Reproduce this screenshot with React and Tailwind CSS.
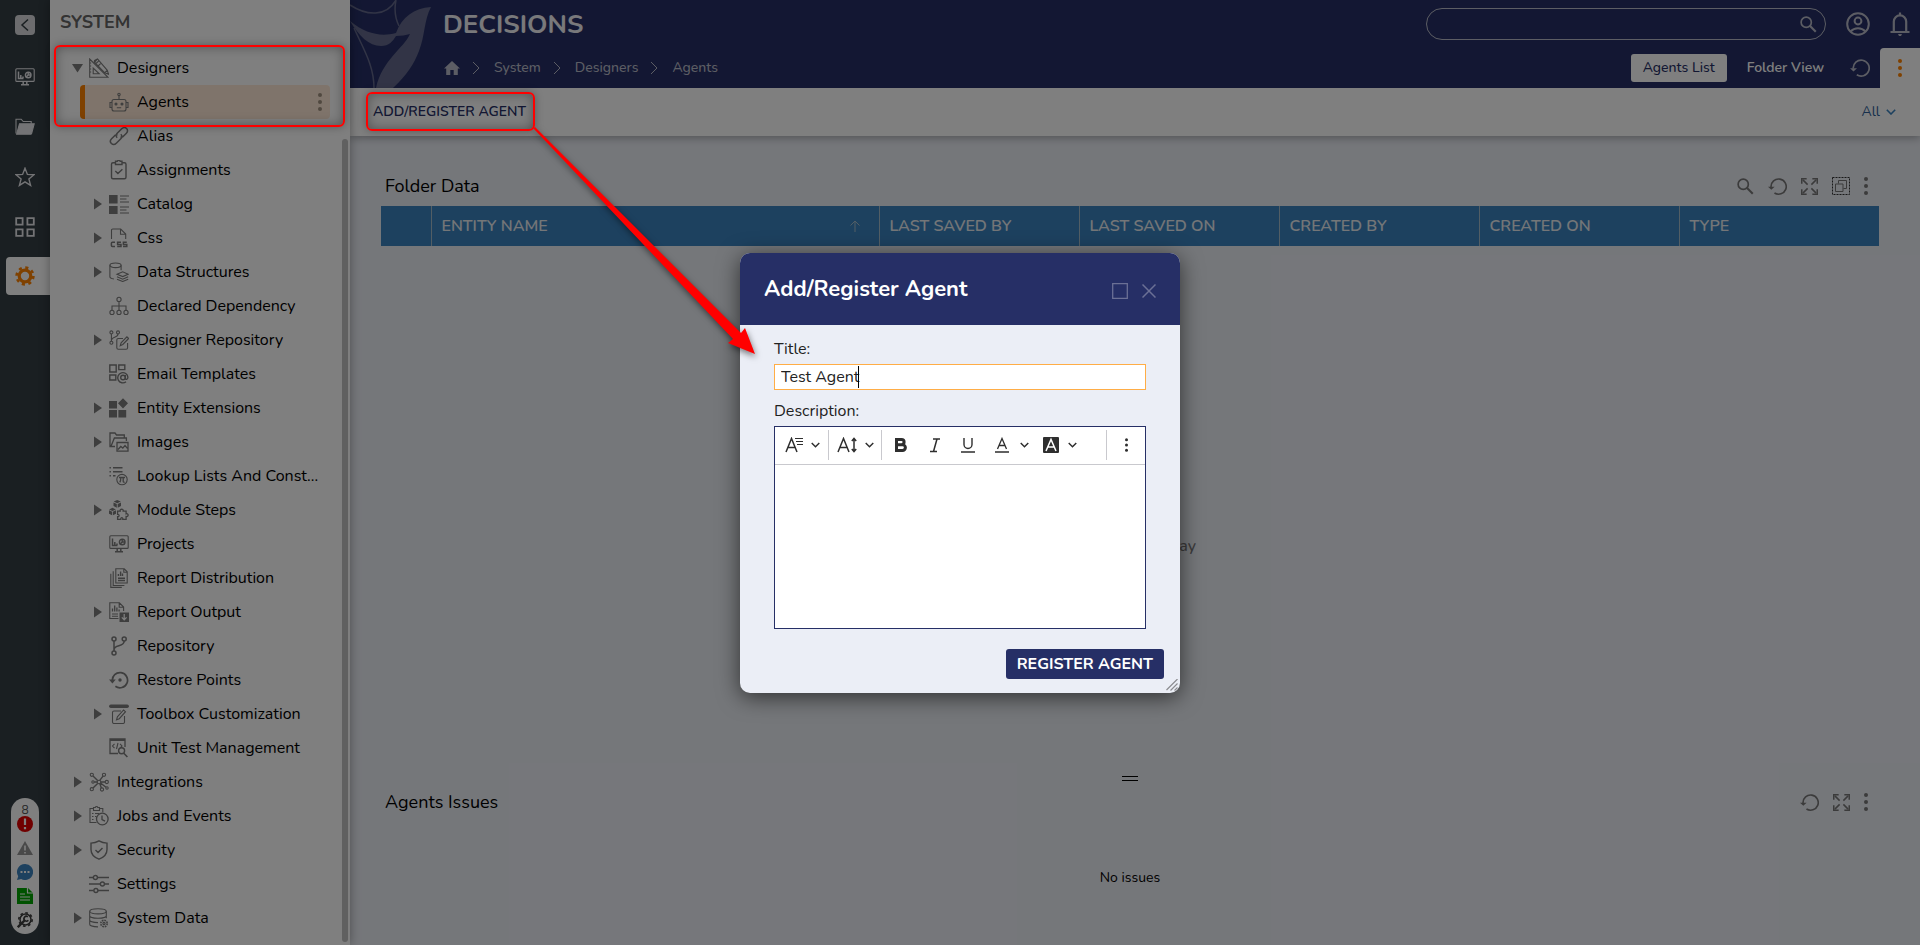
import { useState } from 'react';

// =====================================================================
// Decisions studio — folder page with the "Add/Register Agent" dialog.
// =====================================================================

const TREE = [
  { label: 'Designers', icon: 'designers', depth: 1, arrow: 'down' },
  { label: 'Agents', icon: 'agents', depth: 2, selected: true },
  { label: 'Alias', icon: 'alias', depth: 2 },
  { label: 'Assignments', icon: 'assignments', depth: 2 },
  { label: 'Catalog', icon: 'catalog', depth: 2, arrow: 'right' },
  { label: 'Css', icon: 'css', depth: 2, arrow: 'right' },
  { label: 'Data Structures', icon: 'dataStructures', depth: 2, arrow: 'right' },
  { label: 'Declared Dependency', icon: 'dependency', depth: 2 },
  { label: 'Designer Repository', icon: 'designerRepo', depth: 2, arrow: 'right' },
  { label: 'Email Templates', icon: 'email', depth: 2 },
  { label: 'Entity Extensions', icon: 'entity', depth: 2, arrow: 'right' },
  { label: 'Images', icon: 'images', depth: 2, arrow: 'right' },
  { label: 'Lookup Lists And Const...', icon: 'lookup', depth: 2 },
  { label: 'Module Steps', icon: 'module', depth: 2, arrow: 'right' },
  { label: 'Projects', icon: 'projects', depth: 2 },
  { label: 'Report Distribution', icon: 'reportDist', depth: 2 },
  { label: 'Report Output', icon: 'reportOut', depth: 2, arrow: 'right' },
  { label: 'Repository', icon: 'repository', depth: 2 },
  { label: 'Restore Points', icon: 'restore', depth: 2 },
  { label: 'Toolbox Customization', icon: 'toolbox', depth: 2, arrow: 'right' },
  { label: 'Unit Test Management', icon: 'unitTest', depth: 2 },
  { label: 'Integrations', icon: 'integrations', depth: 1, arrow: 'right' },
  { label: 'Jobs and Events', icon: 'jobs', depth: 1, arrow: 'right' },
  { label: 'Security', icon: 'security', depth: 1, arrow: 'right' },
  { label: 'Settings', icon: 'settings', depth: 1 },
  { label: 'System Data', icon: 'systemData', depth: 1, arrow: 'right' },
];

const COLUMNS = ['LAST SAVED BY', 'LAST SAVED ON', 'CREATED BY', 'CREATED ON', 'TYPE'];

// ─── 20×20 outline drawings ──────────────────────────────────────────
const ICONS = {
  monitor: (
    <>
      <rect x="0.8" y="1.8" width="18.4" height="12.6" rx="1" />
      <path strokeWidth="1.5" d="M3.5 4.5v7h5M5.8 11V8M8 11V9.5M6 17.8h8M8.2 14.5v3.3M11.8 14.5v3.3" />
      <circle cx="13.2" cy="8" r="2.8" strokeWidth="1.4" />
      <path strokeWidth="1.4" d="M13.2 5.2V8h2.8M13.2 8l-2 1.9" />
    </>
  ),
  folder: (
    <>
      <path d="M1 16.5V2.2h5.2l2 2.3h8v2.2" />
      <path d="M4.5 6.8h14.7l-2.6 9.7a1 1 0 0 1-1 .8H1.6z" fill="currentColor" />
    </>
  ),
  star: <path strokeWidth="1.4" d="M10 1.2l2.4 6.2 6.6.3-5.1 4.2 1.7 6.5L10 14.8l-5.6 3.6 1.7-6.5L1 7.7l6.6-.3z" />,
  grid: <path strokeWidth="1.8" d="M1.2 1.2h6.4v6.4H1.2zM12.4 1.2h6.4v6.4h-6.4zM1.2 12.4h6.4v6.4H1.2zM12.4 12.4h6.4v6.4h-6.4z" />,
  designers: (
    <>
      <path d="M.7 1v18.3H19z M4.2 10v5.8h6z M.7 5h1.5M.7 8h1.5M.7 11h1.5M.7 14h1.5" />
      <path d="M5.5 2.5l3-1.5 9.8 11.3 1.2 3.9-3.7-1.4L5.2 4zM8.5 1l-2.8 3.2M7 5.5l2.8-2.6M9 8l2.6-2.4M15.6 14.8l2.5-2.4" />
    </>
  ),
  agents: (
    <>
      <rect x="3" y="7.5" width="14" height="11.5" rx="2" />
      <path d="M3 10.5H1v5h2M17 10.5h2v5h-2M10 7.5V3.5M7.8 15.8h4.4" />
      <circle cx="10" cy="2.4" r="1.2" />
      <circle cx="7" cy="12" r="1" fill="currentColor" />
      <circle cx="13" cy="12" r="1" fill="currentColor" />
    </>
  ),
  alias: (
    <path strokeWidth="1.5" d="M8.2 11.8c-1.4-1.4-1.3-3.2 0-4.5l4.5-4.5c1.5-1.5 3.6-1.5 4.9-.3 1.3 1.3 1.2 3.4-.2 4.8l-3.6 3.6-2.4.4M11.8 8.2c1.4 1.4 1.3 3.2 0 4.5l-4.5 4.5c-1.5 1.5-3.6 1.5-4.9.3-1.3-1.3-1.2-3.4.2-4.8l3.6-3.6 2.4-.4" />
  ),
  assignments: (
    <>
      <path strokeWidth="1.4" d="M6.5 2.8H4a1.5 1.5 0 0 0-1.5 1.5v13A1.5 1.5 0 0 0 4 18.8h11.5a1.5 1.5 0 0 0 1.5-1.5v-13a1.5 1.5 0 0 0-1.5-1.5H13" />
      <path strokeWidth="1.4" d="M6.5 1.2h1.8a1.6 1.6 0 0 1 2.9 0H13v3.3H6.5zM6.3 11l2.6 2.6 4.5-4.4" />
    </>
  ),
  catalog: (
    <>
      <path fill="currentColor" stroke="none" d="M0 1h8.6v8.4H0zM0 12h8.6v8H0z" />
      <path d="M11 2h9M11 5h6.5M11 8h9M11 13h9M11 16h6.5M11 19h9" />
    </>
  ),
  css: (
    <>
      <path d="M2.5 11V2.2A1.2 1.2 0 0 1 3.7 1h8l5 5v5M11.5 1v5.2h5" />
      <path strokeWidth="1.5" d="M6 14.2H3.4a1 1 0 0 0-1 1v2.4a1 1 0 0 0 1 1H6M12 14.2H8.6v2.2H12v2.2H8.2M17.8 14.2h-3.4v2.2h3.4v2.2H14" />
    </>
  ),
  dataStructures: (
    <>
      <ellipse cx="6.5" cy="3.3" rx="5.6" ry="2.3" />
      <path d="M.9 3.3v11.5c0 1.1 1.7 1.9 4 2.2M12.1 3.3v5" />
      <path d="M8 12.2l5.7-2.4 5.5 2.4-5.5 2.4zM8 14.8l5.7 2.4 5.5-2.4M8 17.3l5.7 2.2 5.5-2.2" />
    </>
  ),
  dependency: (
    <>
      <circle cx="10" cy="3.4" r="2.1" />
      <circle cx="3" cy="16.4" r="2.1" />
      <circle cx="10" cy="16.4" r="2.1" />
      <circle cx="17" cy="16.4" r="2.1" />
      <path d="M10 5.5v8.8M3 14.3V10h14v4.3" />
    </>
  ),
  designerRepo: (
    <>
      <circle cx="2.4" cy="2.4" r="1.5" />
      <circle cx="9" cy="2.4" r="1.5" />
      <circle cx="2.4" cy="12.8" r="1.5" />
      <path d="M2.4 4v7.2M9 4c0 4-6.4 2.5-6.4 6" />
      <path d="M14 8.5H9.3a1.5 1.5 0 0 0-1.5 1.5v7.7a1.5 1.5 0 0 0 1.5 1.5h7.8a1.5 1.5 0 0 0 1.5-1.5V13M11.2 15.8l.9-3 5.8-6 1.7 1.7-5.8 6z" />
    </>
  ),
  email: (
    <>
      <path strokeWidth="1.4" d="M.8 1h6.4v7H.8zM9.8 1h6v4.6h-6zM.8 11h6v5h-6z" />
      <circle cx="14" cy="13.5" r="2.3" strokeWidth="1.4" />
      <path strokeWidth="1.4" d="M16.3 11v3.3c0 1.7 2.6 1.4 2.6-1A5.1 5.1 0 1 0 17 17.7" />
    </>
  ),
  entity: <path fill="currentColor" stroke="none" d="M0 3h8v7.6H0zM0 12h8v7.6H0zM9.4 12h7.8v7.6H9.4zM14 .2l5 5.1-5 5.1-5-5.1z" />,
  images: (
    <>
      <path strokeWidth="1.3" d="M6 14.5H1V1h5l1.5 2h7.8v2.6M2 14.3L5.4 6h12v3" />
      <path strokeWidth="1.3" d="M8 10.5h11v8.7H8zM9 17.5l2.8-3 2 1.6 2.2-2.5 2.4 2.8" />
    </>
  ),
  lookup: (
    <>
      <path strokeWidth="1.4" d="M.5 1.8h1.4M4 1.8h9.5M.5 5.8h1.4M4 5.8h9.5M.5 9.8h1.4M4 9.8h2.5" />
      <circle cx="13" cy="13.6" r="5.2" />
      <path strokeWidth="1.3" d="M10 11.5h6M11.8 11.8c0 2-.2 3.4-1 4.5M14.2 11.6v3.6c0 .9.7 1.2 1.5.8" />
    </>
  ),
  module: (
    <>
      <path fill="currentColor" stroke="none" d="M8.2 0l3.6 1.6L8.2 3.3 4.7 1.6zM4.5 2.4l3.3 1.5v3.8L4.5 6.1zM12 2.4L8.7 3.9v3.8L12 6.1zM3.5 7.8l3.4 1.6-3.4 1.7L.1 9.4zM0 10.2l3.1 1.5v3.5L0 13.7zM7 10.2l-3.1 1.5v3.5L7 13.7z" />
      <path strokeWidth="1.3" d="M8.6 11.2h2.6c-.9-2.6 3.8-2.6 3 0h2.9v2.6c2.7-.8 2.7 3.4 0 2.7v2.8h-3.3c.5-2.2-2.5-2.2-2 0H8.6v-2.6c2 .4 2-2.7 0-2.4z" />
    </>
  ),
  reportDist: (
    <>
      <path d="M6.8.8h8.4l3 3V15H6.8zM14.8.8v3.4h3.4M4.2 3.2v14.3h11.2M1.8 5.8V19.4h11" />
      <path strokeWidth="1.4" d="M9.4 8V6M11.6 8V3.5M13.5 8V5.5M9 10.3h7M9 12.5h7" />
    </>
  ),
  reportOut: (
    <>
      <path d="M9.5 16.5H.8V.8h9.6l4.2 4.2v4M10.2.8v4.4h4.4M3 12h6M3 14.2h6" />
      <path strokeWidth="1.3" d="M3.5 9.5V6.5M5.7 9.5V3.5M7.9 9.5V5.5M10.1 9.5v-2" />
      <path fill="currentColor" stroke="none" d="M10.5 10.5H20V20h-9.5z" />
      <path stroke="#fff" strokeWidth="1.3" d="M15.2 12v5.6M12.8 15.4l2.4 2.4 2.4-2.4" />
    </>
  ),
  repository: (
    <>
      <circle cx="5" cy="3" r="2" strokeWidth="1.5" />
      <circle cx="15.2" cy="3" r="2" strokeWidth="1.5" />
      <circle cx="5" cy="17" r="2" strokeWidth="1.5" />
      <path strokeWidth="1.5" d="M5 5v10M15.2 5c0 6.5-10 3-10 8.5" />
    </>
  ),
  restore: (
    <>
      <path strokeWidth="1.7" d="M3.4 11a7.6 7.6 0 1 1 3 5.3" />
      <path fill="currentColor" stroke="none" d="M0 9.6h6.8L3.4 13.4z" />
      <circle cx="11" cy="10" r="1.7" fill="currentColor" stroke="none" />
    </>
  ),
  toolbox: (
    <>
      <path strokeWidth="3.4" strokeLinecap="round" d="M1.8 2.2h16.4" />
      <path d="M12 7H5a1.5 1.5 0 0 0-1.5 1.5V18A1.5 1.5 0 0 0 5 19.5h9a1.5 1.5 0 0 0 1.5-1.5v-6" />
      <path d="M7.5 15.8l.9-3L14.600 6l1.900 1.700-6.200 7z" />
    </>
  ),
  unitTest: (
    <>
      <path strokeWidth="1.3" d="M9 15.5H1V1h15v8" />
      <path strokeWidth="2" d="M1 2h15" />
      <path d="M5.5 5.8L3.5 8l2 2.2M11 5.8L13 8l-1.5 1.7M9 5l-1.5 6" />
      <circle cx="12.6" cy="12.8" r="3" strokeWidth="1.4" />
      <path strokeWidth="1.6" d="M14.8 15.2l3.6 3.8" />
    </>
  ),
  integrations: (
    <>
      <circle cx="10" cy="10" r="1.8" />
      <circle cx="2.8" cy="2.8" r="1.6" />
      <circle cx="15" cy="2.8" r="1.6" />
      <circle cx="2.8" cy="17.2" r="1.6" />
      <circle cx="13" cy="17.5" r="1.6" />
      <circle cx="17.8" cy="10" r="1.6" />
      <circle cx="4" cy="10" r="1.2" />
      <circle cx="18" cy="16" r="1.2" />
      <path strokeWidth="1.4" d="M4 4l4.6 4.6M14 4.2l-3.2 4.2M4 16l4.6-4.6M12.4 16l-1.6-4.4M11.8 10h4.4M5.2 10h3M11.5 11l5.5 4.3" />
    </>
  ),
  jobs: (
    <>
      <path d="M4.500 2.500H1v14h6.500M10.500 2.500h3.300v3.800M4.500 1.500h1.800a1.300 1.300 0 0 1 2.500 0h1.700v3h-6zM3 7.500h1.500M6 7.500h4M3 10.500h1.500M6 10.500h1.500M3 13.500h1.500" />
      <circle cx="13.3" cy="13" r="5.8" strokeWidth="1.3" />
      <path strokeWidth="1.3" d="M13 9.5v4l3 1.600" />
    </>
  ),
  security: (
    <path strokeWidth="1.4" d="M10 .9c2.5 1.500 5.200 2.200 8 2.200v6.400c0 4.500-3 7.800-8 9.700-5-1.900-8-5.200-8-9.700V3.100c2.800 0 5.500-.7 8-2.200zM6.500 10l2.500 2.500 4.500-4.600" />
  ),
  settings: (
    <>
      <path strokeWidth="1.5" d="M0 3.500h4.300M8.500 3.500H20M0 10h11.300M15.500 10H20M0 16.500h4.800M9 16.500h11" />
      <circle cx="6.4" cy="3.5" r="2" strokeWidth="1.4" />
      <circle cx="13.4" cy="10" r="2" strokeWidth="1.4" />
      <circle cx="6.9" cy="16.5" r="2" strokeWidth="1.4" />
    </>
  ),
  systemData: (
    <>
      <ellipse cx="9" cy="3.3" rx="8.3" ry="2.6" />
      <path d="M.7 3.300v13c0 1.400 3.700 2.600 8.300 2.600M17.300 3.300v7M.7 7.700c0 1.400 3.700 2.600 8.300 2.600s8.300-1.200 8.300-2.600M.7 12c0 1.400 3.700 2.600 8.300 2.600" />
      <circle cx="15" cy="15.5" r="3.2" strokeDasharray="1.7 .8" strokeWidth="1.6" />
      <circle cx="15" cy="15.5" r="1.1" />
    </>
  ),
};
ICONS.projects = ICONS.monitor;

function Icon({ name, className = 'size-5' }) {
  return (
    <svg viewBox="0 0 20 20" fill="none" stroke="currentColor" strokeWidth="1.1" aria-hidden="true" className={`shrink-0 ${className}`}>
      {ICONS[name]}
    </svg>
  );
}

// ─── small shared glyphs ─────────────────────────────────────────────
function Refresh({ className }) {
  return (
    <svg viewBox="0 0 20 20" fill="none" stroke="currentColor" strokeWidth="1.7" aria-hidden="true" className={className}>
      <path d="M3.2 10.5a8 8 0 1 1 3.6 6.3" />
      <path d="M0 10.200h7L3.500 13.500z" fill="currentColor" stroke="none" />
    </svg>
  );
}

function Search({ className }) {
  return (
    <svg viewBox="0 0 18 18" fill="none" stroke="currentColor" strokeWidth="1.8" aria-hidden="true" className={className}>
      <circle cx="6.6" cy="6.6" r="5.4" />
      <path d="M10.4 10.4l6.300 6.300" strokeWidth="2.2" />
    </svg>
  );
}

function Expand({ className }) {
  return (
    <svg viewBox="0 0 18 18" fill="none" stroke="currentColor" strokeWidth="1.6" aria-hidden="true" className={className}>
      <path d="M7 7L2 2M11 7l5-5M7 11l-5 5M11 11l5 5" />
      <path d="M.8 6V.8H6M12 .8h5.200V6M.8 12v5.200H6M12 17.200h5.200V12" />
    </svg>
  );
}

function Kebab({ className }) {
  return (
    <svg viewBox="0 0 4 18" fill="currentColor" aria-hidden="true" className={className}>
      <circle cx="2" cy="2" r="2" />
      <circle cx="2" cy="9" r="2" />
      <circle cx="2" cy="16" r="2" />
    </svg>
  );
}

function Chevron({ className }) {
  return (
    <svg viewBox="0 0 10 6" fill="none" stroke="currentColor" strokeWidth="1.6" aria-hidden="true" className={className}>
      <path d="M.8.800l4.200 4.200L9.200.8" />
    </svg>
  );
}

function Gear({ className }) {
  return (
    <svg viewBox="0 0 20 20" fill="none" stroke="currentColor" aria-hidden="true" className={className}>
      <circle cx="10" cy="10" r="5.8" strokeWidth="3.2" />
      <circle cx="10" cy="10" r="8.4" strokeWidth="2.6" strokeDasharray="3.1 3.5" />
    </svg>
  );
}

export default function App() {
  return (
    <div className="relative flex h-screen min-h-[945px] overflow-hidden bg-[#ebeef5] font-['Nunito','Lato',sans-serif] text-base text-black">
      <Rail />
      <Sidebar />
      <div className="flex min-w-0 flex-1 flex-col">
        <Header />
        <Toolbar />
        <FolderData />
        <Issues />
      </div>
      <div className="absolute inset-0 z-20 bg-black/50" />
      <AgentDialog />
      <Callouts />
    </div>
  );
}

// ─── icon rail ───────────────────────────────────────────────────────
function Rail() {
  return (
    <nav className="flex w-[50px] shrink-0 flex-col items-center bg-[#343e44] pt-[15px] pb-[11px] text-[#e6e6ea]">
      <button aria-label="Collapse" className="grid size-5 place-items-center rounded-sm bg-[#d8d9dc] text-[#343e44]">
        <svg viewBox="0 0 10 14" fill="none" stroke="currentColor" strokeWidth="1.5" className="h-3.5 w-2.5">
          <path d="M8 1.500L2 7l6 5.500" />
        </svg>
      </button>
      <div className="mt-8 flex flex-col gap-[30px]">
        <button aria-label="Dashboards" className="size-5"><Icon name="monitor" /></button>
        <button aria-label="Folders" className="size-5"><Icon name="folder" /></button>
        <button aria-label="Favorites" className="size-5"><Icon name="star" /></button>
        <button aria-label="Apps" className="size-5"><Icon name="grid" /></button>
      </div>
      <button aria-label="System" className="mt-5 flex h-[38px] w-11 items-center self-end rounded-l bg-white pl-[9px] text-[#ff8200]">
        <Gear className="size-5" />
      </button>
      <StatusPill />
    </nav>
  );
}

function StatusPill() {
  return (
    <div className="mt-auto flex h-[136px] w-7 flex-col items-center rounded-full bg-white pt-1 text-[#505050]">
      <span className="text-xs leading-4">8</span>
      <div className="-mt-0.5 flex flex-col gap-2">
        <svg viewBox="0 0 16 16" className="size-4" aria-label="Errors">
          <circle cx="8" cy="8" r="8" fill="#e00000" />
          <path d="M8 2.500v6.500M8 11v2.300" stroke="#fff" strokeWidth="2.2" />
        </svg>
        <svg viewBox="0 0 16 16" className="size-4" aria-label="Warnings">
          <path d="M8 1l8 14H0z" fill="#929292" />
          <path d="M8 5.500v5M8 12v1.500" stroke="#fff" strokeWidth="1.6" />
        </svg>
        <svg viewBox="0 0 16 16" className="size-4" aria-label="Messages">
          <path d="M8 0a8 8 0 1 1-3.800 15L0 16l1.200-3.800A8 8 0 0 1 8 0z" fill="#3b83bf" />
          <path d="M3.500 8h2M7 8h2M10.500 8h2" stroke="#fff" strokeWidth="2" />
        </svg>
        <svg viewBox="0 0 16 16" className="size-4" aria-label="Logs">
          <path d="M0 0h11l5 5v11H0z" fill="#00a400" />
          <path d="M10.500 0v5H16M3 6h5M3 9h10M3 12h10" stroke="#fff" strokeWidth="1.2" fill="none" />
        </svg>
        <svg viewBox="0 0 16 16" fill="none" stroke="#3c3c3c" className="size-4" aria-label="Diagnostics">
          <circle cx="8.5" cy="7.5" r="5.5" strokeWidth="1.5" />
          <circle cx="8.5" cy="7.5" r="6.700" strokeWidth="1.600" strokeDasharray="2.600 2.600" />
          <path d="M.8 15.200L7.500 8.500" strokeWidth="2.400" />
          <path d="M10.800 4.800a2.400 2.400 0 1 0 .5 3.400" strokeWidth="1.600" />
        </svg>
      </div>
    </div>
  );
}

// ─── folder tree ─────────────────────────────────────────────────────
function Sidebar() {
  return (
    <aside className="relative z-10 flex w-[300px] shrink-0 flex-col bg-white shadow-[0_0_10px_rgba(0,0,0,0.35)]">
      <h2 className="flex h-[51px] items-center pb-2 pl-2.5 text-lg font-bold text-[#666]">SYSTEM</h2>
      <ul>
        {TREE.map((node) => (
          <TreeRow key={node.label} node={node} />
        ))}
      </ul>
      <span className="absolute top-[139px] right-0.5 bottom-[3px] w-1.5 rounded-full bg-[#c0c0c0]" />
    </aside>
  );
}

function TreeRow({ node }) {
  return (
    <li
      className={`mr-5 flex h-[34px] items-center rounded border-l-[5px] pl-[7px] ${node.depth === 2 ? 'ml-[30px]' : 'ml-2.5'} ${
        node.selected ? 'border-[#ff8200] bg-[#ffe9d6]' : 'border-transparent'
      }`}
    >
      <span className="w-[17px] shrink-0 text-[#7c7c7c]">
        {node.arrow && (
          <svg viewBox="0 0 12 12" fill="currentColor" aria-hidden="true" className="size-3">
            <path d={node.arrow === 'down' ? 'M0 2h11L5.500 10.500z' : 'M2 .5v11l8-5.500z'} />
          </svg>
        )}
      </span>
      <Icon name={node.icon} className="size-5 text-[#7c7c7c]" />
      <a href="#" className="ml-2 flex-1 whitespace-nowrap">{node.label}</a>
      {node.selected && (
        <button aria-label="Agent actions" className="mr-2 text-[#a09080]"><Kebab className="h-[18px] w-1" /></button>
      )}
    </li>
  );
}

// ─── page header ─────────────────────────────────────────────────────
function Header() {
  return (
    <header className="relative flex h-[88px] shrink-0 justify-between overflow-hidden bg-[#262f66] text-[#f2f2f6]">
      <svg viewBox="0 0 90 88" aria-hidden="true" className="absolute top-0 left-0 h-[88px] w-[90px] text-[#64698c]">
        <path d="M81 7C64 8 52 17 46 33 31 37 16 34 0 21c9 15 19 25 31 25 8 0 12-5 15-10 5 0 10-1 14-2-6 14-28 26-34 54h17c14-13 21-24 26-37 6-15 5-31 12-44z" fill="currentColor" />
        <path d="M0 5c17 11 36 12 46-5M46 0c-2 10-1 18 3 26M4 28c10 22 20 38 20 60" fill="none" stroke="currentColor" strokeWidth="1.5" />
      </svg>
      <div className="flex flex-col pt-[9px] pl-[93px]">
        <h1 className="text-[26px] leading-8 font-bold">DECISIONS</h1>
        <nav aria-label="Breadcrumb" className="mt-[17px] flex items-center text-sm font-medium text-[#b9bbc8]">
          <a href="#" aria-label="Home" className="ml-px">
            <svg viewBox="0 0 16 14" fill="currentColor" className="h-3.5 w-4">
              <path d="M8 0l8 7.500h-2.200V14H9.700V9H6.300v5H2.200V7.500H0z" />
            </svg>
          </a>
          {['System', 'Designers', 'Agents'].map((crumb) => (
            <span key={crumb} className="flex items-center">
              <svg viewBox="0 0 8 14" fill="none" stroke="currentColor" className="mr-3.5 ml-3 h-3.5 w-2">
                <path d="M1 1l6 6-6 6" />
              </svg>
              <a href="#">{crumb}</a>
            </span>
          ))}
        </nav>
      </div>
      <div className="flex flex-col items-end">
        <div className="flex h-12 items-center gap-5 pr-2.5 text-[#b9bbc8]">
          <label className="flex h-8 w-[400px] items-center rounded-full border border-[#b9bbc8] pr-2 pl-4">
            <input type="search" aria-label="Search" className="min-w-0 flex-1 bg-transparent outline-none" />
            <Search className="size-[17px]" />
          </label>
          <button aria-label="Account">
            <svg viewBox="0 0 24 24" fill="none" stroke="currentColor" strokeWidth="2" className="size-6">
              <circle cx="12" cy="12" r="10.8" />
              <circle cx="12" cy="9" r="3.4" />
              <path d="M4.500 19.500c4-4.300 11-4.300 15 0" />
            </svg>
          </button>
          <button aria-label="Notifications">
            <svg viewBox="0 0 20 24" fill="none" stroke="currentColor" strokeWidth="2.200" className="h-6 w-5">
              <path d="M3.800 19V9.600a6.200 6.200 0 0 1 12.400 0V19" />
              <path d="M.5 20h19M10 .5v3" />
              <path d="M8 22h4l-1 2H9z" fill="currentColor" stroke="none" />
            </svg>
          </button>
        </div>
        <div className="flex h-10 items-center text-sm font-medium">
          <button className="h-7 rounded-[3px] bg-white px-3 text-[#262f66]">Agents List</button>
          <button className="ml-5 font-semibold text-white">Folder View</button>
          <button aria-label="Refresh" className="mr-2.5 ml-[26px] text-[#b9bbc8]"><Refresh className="size-5" /></button>
          <button aria-label="More" className="grid h-10 w-10 place-items-center rounded-tl bg-white text-[#ff8200]">
            <Kebab className="h-[18px] w-1" />
          </button>
        </div>
      </div>
    </header>
  );
}

function Toolbar() {
  return (
    <div className="flex h-12 shrink-0 items-center justify-between bg-white pr-6 pl-[23px] text-sm shadow-[0_2px_8px_rgba(0,0,0,0.3)]">
      <button className="font-semibold text-[#262f66]">ADD/REGISTER AGENT</button>
      <button className="flex items-center gap-1.5 text-[#2f5f99]">
        All
        <Chevron className="h-1.5 w-2.5 text-[#3b83bf]" />
      </button>
    </div>
  );
}

// ─── folder data table ───────────────────────────────────────────────
function FolderData() {
  return (
    <section className="flex flex-1 flex-col pt-8 pr-[41px] pl-[31px]">
      <div className="flex h-[38px] items-center justify-between pr-[11px] pb-0.5 pl-1">
        <h3 className="text-lg">Folder Data</h3>
        <div className="flex items-center gap-3.5 text-[#777]">
          <button aria-label="Search"><Search className="size-[17px]" /></button>
          <button aria-label="Refresh"><Refresh className="size-[19px]" /></button>
          <button aria-label="Expand"><Expand className="size-[17px]" /></button>
          <button aria-label="Select">
            <svg viewBox="0 0 18 18" fill="none" stroke="currentColor" className="size-[18px]">
              <path d="M.5.500h17v17H.5z" stroke="#333" strokeDasharray="2 1" />
              <path d="M3.500 7h7.500v7.500H3.500zM6.500 6.500v-3h8v8h-3" />
            </svg>
          </button>
          <button aria-label="More"><Kebab className="h-[18px] w-1" /></button>
        </div>
      </div>
      <table className="w-full table-fixed bg-[#3b83bf] text-left text-[#e8ecf0]">
        <thead>
          <tr className="h-10">
            <th className="w-[50px] border-r border-[#a5bccb]" aria-label="Icon" />
            <th className="border-r border-[#a5bccb] px-2.5 font-semibold">
              <div className="flex items-center justify-between pr-2">
                ENTITY NAME
                <svg viewBox="0 0 12 12" fill="none" stroke="#a5bccb" className="size-3">
                  <path d="M6 12V1M1.500 5.500L6 1l4.500 4.500" />
                </svg>
              </div>
            </th>
            {COLUMNS.map((name) => (
              <th key={name} className="w-[200px] border-r border-[#a5bccb] px-2.5 font-semibold last:border-r-0">{name}</th>
            ))}
          </tr>
        </thead>
      </table>
      <p className="flex flex-1 items-center justify-center pt-[70px] font-medium text-[#777]">No data to display</p>
    </section>
  );
}

// ─── issues pane below the splitter ──────────────────────────────────
function Issues() {
  return (
    <section className="h-[169px] shrink-0 pr-[41px] pl-[31px]">
      <div className="mx-auto h-[5px] w-4 border-y border-black" />
      <div className="mt-[3px] flex h-9 items-center justify-between pr-[11px] pl-1">
        <h3 className="text-lg">Agents Issues</h3>
        <div className="flex items-center gap-3.5 text-[#777]">
          <button aria-label="Refresh"><Refresh className="size-[19px]" /></button>
          <button aria-label="Expand"><Expand className="size-[17px]" /></button>
          <button aria-label="More"><Kebab className="h-[18px] w-1" /></button>
        </div>
      </div>
      <p className="mt-12 text-center text-sm">No issues</p>
    </section>
  );
}

// ─── dialog ──────────────────────────────────────────────────────────
function AgentDialog() {
  const [title, setTitle] = useState('Test Agent');

  return (
    <div className="absolute inset-0 z-30 grid place-items-center">
      <form
        role="dialog"
        aria-labelledby="dialog-title"
        className="relative flex h-[440px] w-[440px] flex-col overflow-hidden rounded-[10px] bg-[#ebeef6] shadow-[0_4px_22px_rgba(0,0,0,0.6)]"
      >
        <header className="flex h-[72px] shrink-0 items-center justify-between bg-[#262f66] px-6 pt-0.5">
          <h2 id="dialog-title" className="text-[22px] font-bold text-white">Add/Register Agent</h2>
          <div className="mt-0.5 flex items-center gap-3.5 text-[#6b7095]">
            <button type="button" aria-label="Maximize">
              <svg viewBox="0 0 16 16" fill="none" stroke="currentColor" strokeWidth="1.3" className="size-4"><path d="M.7.7h14.600v14.600H.7z" /></svg>
            </button>
            <button type="button" aria-label="Close">
              <svg viewBox="0 0 14 14" fill="none" stroke="currentColor" strokeWidth="1.5" className="size-3.5"><path d="M.5.500l13 13M13.500.5l-13 13" /></svg>
            </button>
          </div>
        </header>
        <div className="flex flex-1 flex-col px-[34px] pt-3 text-[#222]">
          <label htmlFor="agent-title" className="h-[27px] leading-6">Title:</label>
          <div className="relative h-[26px]">
            <input
              id="agent-title"
              value={title}
              onChange={(e) => setTitle(e.target.value)}
              className="h-full w-full border border-[#ffad46] bg-white px-1.5 outline-none"
            />
            <span className="absolute top-0.5 left-[84px] h-[22px] w-px bg-black" />
          </div>
          <label htmlFor="agent-description" className="mt-[9px] h-[27px] leading-6">Description:</label>
          <div className="flex h-[203px] flex-col border border-[#262f66] bg-white">
            <EditorBar />
            <textarea id="agent-description" className="flex-1 resize-none p-2 outline-none" />
          </div>
        </div>
        <footer className="flex justify-end px-4 pb-3.5">
          <button type="button" className="h-[30px] rounded-[3px] bg-[#262f66] px-[11px] pt-px font-bold text-white">REGISTER AGENT</button>
        </footer>
        <svg viewBox="0 0 12 12" fill="none" stroke="#8c8c90" strokeWidth="1.2" className="absolute right-0.5 bottom-0.5 size-3">
          <path d="M.5 11L11.500 0M4.500 11.500l7-7M8.500 11.500l3-3" />
        </svg>
      </form>
    </div>
  );
}

// ─── rich text toolbar ───────────────────────────────────────────────
function EditorBar() {
  return (
    <div role="toolbar" className="flex h-[38px] shrink-0 items-center border-b border-[#c9c9ce] text-[#2e2e2e]">
      <button type="button" aria-label="Font family" className="flex w-[53px] items-center gap-2 pl-2.5">
        <svg viewBox="0 0 18 16" fill="none" stroke="currentColor" strokeWidth="1.5" className="h-4 w-[18px]">
          <path d="M1 15L6.500 1.500 12 15M3 10.500h7" />
          <path d="M10 1.500h8M11 4.500h7M12 7.500h6" strokeWidth="1.200" />
        </svg>
        <Chevron className="h-1.5 w-[9px]" />
      </button>
      <span className="h-[30px] w-px bg-[#c9c9ce]" />
      <button type="button" aria-label="Font size" className="flex w-[52px] items-center gap-2 pl-2">
        <svg viewBox="0 0 20 16" fill="none" stroke="currentColor" strokeWidth="1.5" className="h-4 w-5">
          <path d="M1 15L6.500 1.500 12 15M3 10.500h7M17 2v12M14.800 4L17 1.500 19.200 4M14.800 12l2.200 2.500 2.200-2.500" />
        </svg>
        <Chevron className="h-1.5 w-[9px]" />
      </button>
      <span className="h-[30px] w-px bg-[#c9c9ce]" />
      <button type="button" aria-label="Bold" className="ml-3 w-3.5">
        <svg viewBox="0 0 14 16" fill="none" stroke="currentColor" strokeWidth="3" className="h-4 w-3.5">
          <path d="M2.500 2.500h5a2.600 2.600 0 0 1 0 5.200h-5zM2.500 7.700h6a2.900 2.900 0 0 1 0 5.800h-6z" />
        </svg>
      </button>
      <button type="button" aria-label="Italic" className="ml-5 w-3.5">
        <svg viewBox="0 0 14 16" fill="none" stroke="currentColor" strokeWidth="1.5" className="h-4 w-3.5">
          <path d="M5 2h7M2 14.500h7M9 2L5.500 14.500" />
        </svg>
      </button>
      <button type="button" aria-label="Underline" className="ml-[19px] w-3.5">
        <svg viewBox="0 0 14 16" fill="none" stroke="currentColor" strokeWidth="1.4" className="h-4 w-3.5">
          <path d="M3 1v6.500a4 4 0 0 0 8 0V1M0 15h14" />
        </svg>
      </button>
      <button type="button" aria-label="Text color" className="ml-5 flex items-center gap-[11px]">
        <svg viewBox="0 0 14 16" fill="none" stroke="currentColor" strokeWidth="1.3" className="h-4 w-3.5">
          <path d="M2.500 12L7 1.500 11.500 12M4.200 8.500h5.600M0 15h14" />
        </svg>
        <Chevron className="h-1.5 w-[9px]" />
      </button>
      <button type="button" aria-label="Highlight" className="ml-3.5 flex items-center gap-[9px]">
        <svg viewBox="0 0 16 16" fill="none" className="size-4">
          <rect width="16" height="16" rx="1" fill="#2e2e2e" />
          <path d="M3 14L8 2.500 13 14M4.800 10h6.400" stroke="#fff" strokeWidth="1.5" />
        </svg>
        <Chevron className="h-1.5 w-[9px]" />
      </button>
      <span className="ml-auto h-[30px] w-px bg-[#c9c9ce]" />
      <button type="button" aria-label="More tools" className="flex w-[38px] justify-center">
        <Kebab className="h-3.5 w-[3px]" />
      </button>
    </div>
  );
}

// ─── red annotations drawn over everything ───────────────────────────
function Callouts() {
  return (
    <div className="pointer-events-none absolute inset-0 z-40">
      <span className="absolute top-[45px] left-[54px] h-[82px] w-[291px] rounded-md border-2 border-[#ff0000] shadow-[0_0_8px_rgba(0,0,0,0.3),inset_0_0_12px_rgba(0,0,0,0.35)]" />
      <span className="absolute top-[92px] left-[366px] h-[39px] w-[169px] rounded-md border-2 border-[#ff0000] shadow-[0_0_8px_rgba(0,0,0,0.3),inset_0_0_12px_rgba(0,0,0,0.35)]" />
      <svg viewBox="0 0 240 240" className="absolute top-[120px] left-[526px] size-[240px] drop-shadow-[1px_3px_3px_rgba(0,0,0,0.5)]">
        <path d="M7 8l2-1 206 206 4-5 10 26-27-11 5-4z" fill="#ff0000" />
      </svg>
    </div>
  );
}
